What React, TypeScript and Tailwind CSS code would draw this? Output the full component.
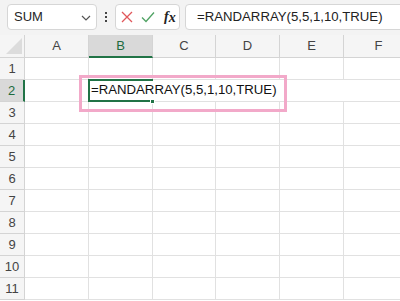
import React from "react";

const cols = ["A", "B", "C", "D", "E", "F"];
const colW = ["w-[64px]", "w-[64px]", "w-[63px]", "w-[64px]", "w-[64px]", "w-[70px]"];
const rows = [1, 2, 3, 4, 5, 6, 7, 8, 9, 10, 11];
const formula = "=RANDARRAY(5,5,1,10,TRUE)";

function Toolbar() {
  return (
    <div className="flex h-[35px] shrink-0 items-start bg-[#f3f3f3] pl-[7px] pt-[4px]">
      {/* Name box */}
      <div className="flex h-[26px] w-[90px] shrink-0 items-center justify-between rounded-[4px] border border-[#d6d6d6] bg-white pl-[6px] pr-[5px]">
        <span className="text-[13px] text-[#262626]">SUM</span>
        <svg width="10" height="6" viewBox="0 0 10 6" className="mt-[1px]">
          <path d="M1 1 L5 5 L9 1" fill="none" stroke="#555" strokeWidth="1.2" />
        </svg>
      </div>
      <div className="flex h-[26px] w-[18px] shrink-0 flex-col items-center justify-center gap-[2px]">
        <span className="h-[2px] w-[2px] bg-[#444]" />
        <span className="h-[2px] w-[2px] bg-[#444]" />
        <span className="h-[2px] w-[2px] bg-[#444]" />
      </div>
      {/* Cancel / enter / fx */}
      <div className="flex h-[26px] w-[65px] shrink-0 items-center rounded-[4px] border border-[#d6d6d6] bg-white pl-[5px]">
        <svg width="12" height="12" viewBox="0 0 12 12">
          <path d="M1 1 L11 11 M11 1 L1 11" stroke="#e0575b" strokeWidth="1.3" />
        </svg>
        <svg width="14" height="12" viewBox="0 0 14 12" className="ml-[8px]">
          <path d="M1 6.5 L5 10.5 L13 1.5" fill="none" stroke="#4fa263" strokeWidth="1.3" />
        </svg>
        <span className="ml-[9px] font-['Liberation_Serif',serif] text-[14px] font-bold italic leading-none text-[#222]">
          f<span className="relative top-[1px]">x</span>
        </span>
      </div>
      {/* Formula bar */}
      <div className="ml-[5px] flex h-[26px] w-[260px] shrink-0 items-center rounded-[4px] border border-[#d6d6d6] bg-white pl-[11px]">
        <span className="whitespace-nowrap text-[13.2px] text-[#222]">{formula}</span>
      </div>
    </div>
  );
}

function HeaderRow() {
  return (
    <div className="flex h-[23px] shrink-0 bg-[#f5f5f5]">
      <div className="relative w-[25px] shrink-0 border-b border-r border-[#d4d4d4]">
        <svg width="16" height="16" viewBox="0 0 16 16" className="absolute bottom-[3px] right-[2px]">
          <path d="M16 0 L16 16 L0 16 Z" fill="#dcdcdc" />
        </svg>
      </div>
      {cols.map((c, i) => (
        <div
          key={c}
          className={`flex shrink-0 items-center justify-center text-[13px] ${colW[i]} ${
            c === "B"
              ? "border-b-2 border-r border-b-[#217346] border-r-[#d4d4d4] bg-[#d9d9d9] text-[#1e6b3e]"
              : "border-b border-r border-[#d4d4d4] text-[#444]"
          }`}
        >
          {c}
        </div>
      ))}
    </div>
  );
}

function Row({ n }: { n: number }) {
  const sel = n === 2;
  return (
    <div className="flex h-[22px] shrink-0">
      <div
        className={`flex w-[25px] shrink-0 items-center justify-center text-[13px] ${
          sel
            ? "border-b border-r-2 border-b-[#d4d4d4] border-r-[#217346] bg-[#d9d9d9] text-[#1e6b3e]"
            : "border-b border-r border-[#d4d4d4] bg-[#f5f5f5] text-[#444]"
        }`}
      >
        {n}
      </div>
      {cols.map((c, i) => {
        const hideRight = sel && (c === "C" || c === "D" || c === "E");
        return (
          <div
            key={c}
            className={`relative shrink-0 border-b border-[#e1e1e1] ${colW[i]} ${
              hideRight ? "" : "border-r"
            }`}
          >
            {sel && c === "B" && (
              <>
                <div className="absolute -left-[1px] -top-[1px] bottom-[-1px] right-[-1px] z-10 border-2 border-[#217346]" />
                <div className="absolute -bottom-[3px] -right-[3px] z-20 h-[5px] w-[5px] border border-white bg-[#217346]" />
                <span className="absolute left-[2px] top-[1px] z-30 whitespace-nowrap bg-white pr-[2px] text-[13.2px] leading-[18px] text-[#111]">
                  {formula}
                </span>
              </>
            )}
          </div>
        );
      })}
    </div>
  );
}

export default function App() {
  return (
    <div className="relative flex h-[301px] w-[400px] flex-col overflow-hidden bg-white font-['Liberation_Sans',Arial,sans-serif]">
      <Toolbar />
      <HeaderRow />
      {rows.map((n) => (
        <Row key={n} n={n} />
      ))}
      {/* highlight annotation */}
      <div className="pointer-events-none absolute left-[79px] top-[75px] z-40 h-[37px] w-[208px] border-[3px] border-[#f2a9c9]" />
    </div>
  );
}
